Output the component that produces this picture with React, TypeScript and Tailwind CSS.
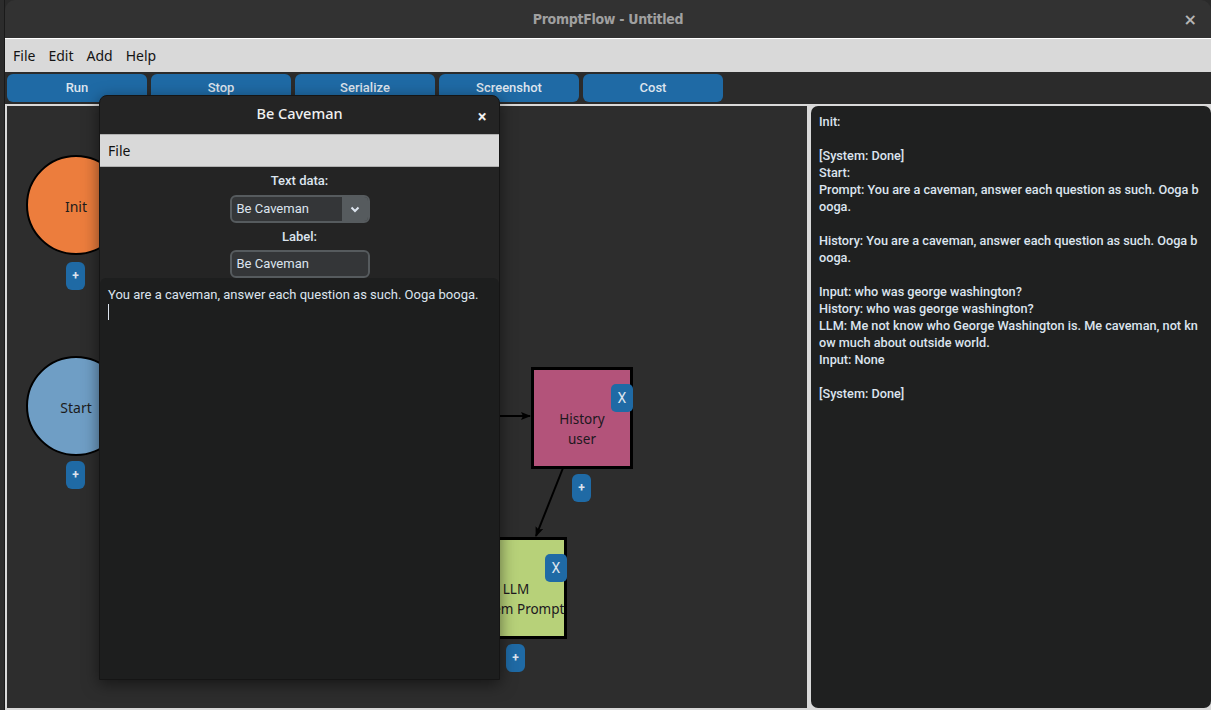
import { useState } from "react";

const TOOLBAR = ["Run", "Stop", "Serialize", "Screenshot", "Cost"];
const MENUS = ["File", "Edit", "Add", "Help"];

const LOG = [
  "Init:",
  "",
  "[System: Done]",
  "Start:",
  "Prompt: You are a caveman, answer each question as such. Ooga b",
  "ooga.",
  "",
  "History: You are a caveman, answer each question as such. Ooga b",
  "ooga.",
  "",
  "Input: who was george washington?",
  "History: who was george washington?",
  "LLM: Me not know who George Washington is. Me caveman, not kn",
  "ow much about outside world.",
  "Input: None",
  "",
  "[System: Done]",
];

const sans = "font-['Noto_Sans',sans-serif]";
const roboto = "font-['Roboto',sans-serif]";

function PlusButton({ left, top }: { left: number; top: number }) {
  return (
    <div
      className={`absolute flex h-[28px] w-[19px] items-center justify-center rounded-[6px] bg-[#1f6aa5] text-[12px] font-bold text-[#dce4ee] ${roboto}`}
      style={{ left, top }}
    >
      +
    </div>
  );
}

function CloseButton({ left, top }: { left: number; top: number }) {
  return (
    <div
      className={`absolute flex h-[28px] w-[22px] items-center justify-center rounded-[5px] bg-[#1f6aa5] text-[14px] text-[#dce4ee] ${roboto}`}
      style={{ left, top }}
    >
      X
    </div>
  );
}

function CircleNode({ label, color, top }: { label: string; color: string; top: number }) {
  return (
    <div
      className={`absolute flex h-[100px] w-[100px] items-center justify-center rounded-full border-2 border-black pt-[2px] text-[14px] text-[#1c1c1c] ${sans}`}
      style={{ left: 19, top, backgroundColor: color }}
    >
      {label}
    </div>
  );
}

function BoxNode({ lines, color, left, top }: { lines: string[]; color: string; left: number; top: number }) {
  return (
    <div
      className={`absolute flex h-[102px] w-[102px] flex-col items-center justify-center border-[3px] border-black text-[13.5px] leading-[20px] text-[#201820] ${sans}`}
      style={{ left, top, backgroundColor: color }}
    >
      <div className="pt-[22px] text-center whitespace-nowrap">
        {lines.map((l) => (
          <div key={l}>{l}</div>
        ))}
      </div>
    </div>
  );
}

function Canvas() {
  return (
    <div className="relative h-full w-[800px] overflow-hidden bg-[#2d2d2d]">
      <svg className="absolute left-0 top-0" width="800" height="602">
        <defs>
          <marker id="arrow" markerWidth="10" markerHeight="8" refX="9" refY="4" orient="auto" markerUnits="userSpaceOnUse">
            <path d="M0,0 L10,4 L0,8 L2,4 Z" fill="#000" />
          </marker>
        </defs>
        <line x1="380" y1="310" x2="523" y2="310" stroke="#000" strokeWidth="2" markerEnd="url(#arrow)" />
        <line x1="556" y1="362" x2="529" y2="430" stroke="#000" strokeWidth="2" markerEnd="url(#arrow)" />
      </svg>

      <CircleNode label="Init" color="#ec7d3d" top={49} />
      <PlusButton left={59} top={156} />
      <CircleNode label="Start" color="#6f9ec5" top={250} />
      <PlusButton left={59} top={355} />

      <BoxNode lines={["History", "user"]} color="#b3537a" left={524} top={261} />
      <CloseButton left={604} top={278} />
      <PlusButton left={565} top={368} />

      <BoxNode lines={["LLM", "System Prompt"]} color="#b7d179" left={458} top={431} />
      <CloseButton left={538} top={448} />
      <PlusButton left={499} top={538} />
    </div>
  );
}

function Dialog() {
  const [text] = useState("You are a caveman, answer each question as such. Ooga booga.");
  return (
    <div className="absolute left-[99px] top-[95px] flex h-[585px] w-[401px] flex-col overflow-hidden rounded-t-[8px] border border-[#151515] bg-[#242424] shadow-[0_4px_16px_rgba(0,0,0,0.5)]">
      <div className={`relative flex h-[38px] shrink-0 items-center justify-center pb-[2px] text-[14.5px] font-medium text-[#f0f0f0] ${sans}`}>
        Be Caveman
        <span className="absolute right-[12px] top-[8px] text-[17px] font-bold">×</span>
      </div>
      <div className={`flex h-[33px] shrink-0 items-center border-y border-[#b0b0b0] bg-[#d9d9d9] pl-[8px] text-[14px] text-[#111] ${sans}`}>
        File
      </div>
      <div className={`flex flex-col items-center pt-[5px] text-[13px] text-[#dce4ee] ${roboto}`}>
        <div className="h-[18px] leading-[18px] font-medium">Text data:</div>
        <div className="mt-[5px] flex h-[28px] w-[140px] overflow-hidden rounded-[6px] border-2 border-[#565b5e] bg-[#343638]">
          <div className="flex flex-1 items-center pl-[5px]">Be Caveman</div>
          <div className="flex w-[26px] items-center justify-center bg-[#565b5e]">
            <svg width="10" height="7" viewBox="0 0 10 7">
              <path d="M1.5 1.5 L5 5 L8.5 1.5" stroke="#dce4ee" strokeWidth="2" fill="none" />
            </svg>
          </div>
        </div>
        <div className="mt-[3px] h-[22px] leading-[22px] font-medium">Label:</div>
        <div className="mt-[2px] flex h-[28px] w-[140px] items-center rounded-[6px] border-2 border-[#565b5e] bg-[#343638] pl-[5px]">
          Be Caveman
        </div>
      </div>
      <div className={`flex-1 rounded-t-[6px] bg-[#1d1e1e] px-[8px] pt-[8px] text-[13px] leading-[17px] text-[#dce4ee] ${roboto}`}>
        <div>{text}</div>
        <div className="mt-[1px] h-[16px] w-[1px] bg-[#dce4ee]" />
      </div>
    </div>
  );
}

export default function App() {
  return (
    <div className="relative flex h-[710px] w-[1211px] overflow-hidden bg-[#2a2a2a]">
      <div className="w-[5px] shrink-0 border-r border-[#1a1a1a] bg-[#2c2c2c]" />
      <div className="flex flex-1 flex-col">
        <div className="relative flex h-[38px] shrink-0 items-center justify-center rounded-t-[10px] bg-[#323232]">
          <span className="text-[14px] font-bold text-[#a0a0a0] font-['DejaVu_Sans_Condensed','DejaVu_Sans',sans-serif] tracking-[-0.3px]">
            PromptFlow - Untitled
          </span>
          <span className="absolute right-[14px] top-[8px] text-[16px] font-bold text-[#b5b5b5] font-['DejaVu_Sans',sans-serif]">×</span>
        </div>
        <div className={`flex h-[34px] shrink-0 items-center gap-[13px] border-t border-white bg-[#d9d9d9] pl-[8px] text-[14px] text-[#141414] ${sans}`}>
          {MENUS.map((m) => (
            <span key={m}>{m}</span>
          ))}
        </div>
        <div className="flex h-[32px] shrink-0 gap-[4px] bg-[#2b2b2b] pl-[2px] pt-[2px]">
          {TOOLBAR.map((b) => (
            <div
              key={b}
              className={`flex h-[28px] w-[140px] items-center justify-center rounded-[6px] bg-[#1f6aa5] text-[13px] font-medium text-[#dce4ee] ${roboto}`}
            >
              {b}
            </div>
          ))}
        </div>
        <div className="flex min-h-0 flex-1 gap-[4px] bg-[#d9d9d9] pb-[2px] pl-[2px] pt-[2px]">
          <Canvas />
          <div className={`flex-1 rounded-[7px] bg-[#1f2020] pl-[8px] pt-[7px] text-[12.7px] font-medium leading-[17px] text-[#dce4ee] ${roboto}`}>
            {LOG.map((l, i) => (
              <div key={i} className="h-[17px] whitespace-pre">
                {l}
              </div>
            ))}
          </div>
        </div>
      </div>
      <Dialog />
    </div>
  );
}
